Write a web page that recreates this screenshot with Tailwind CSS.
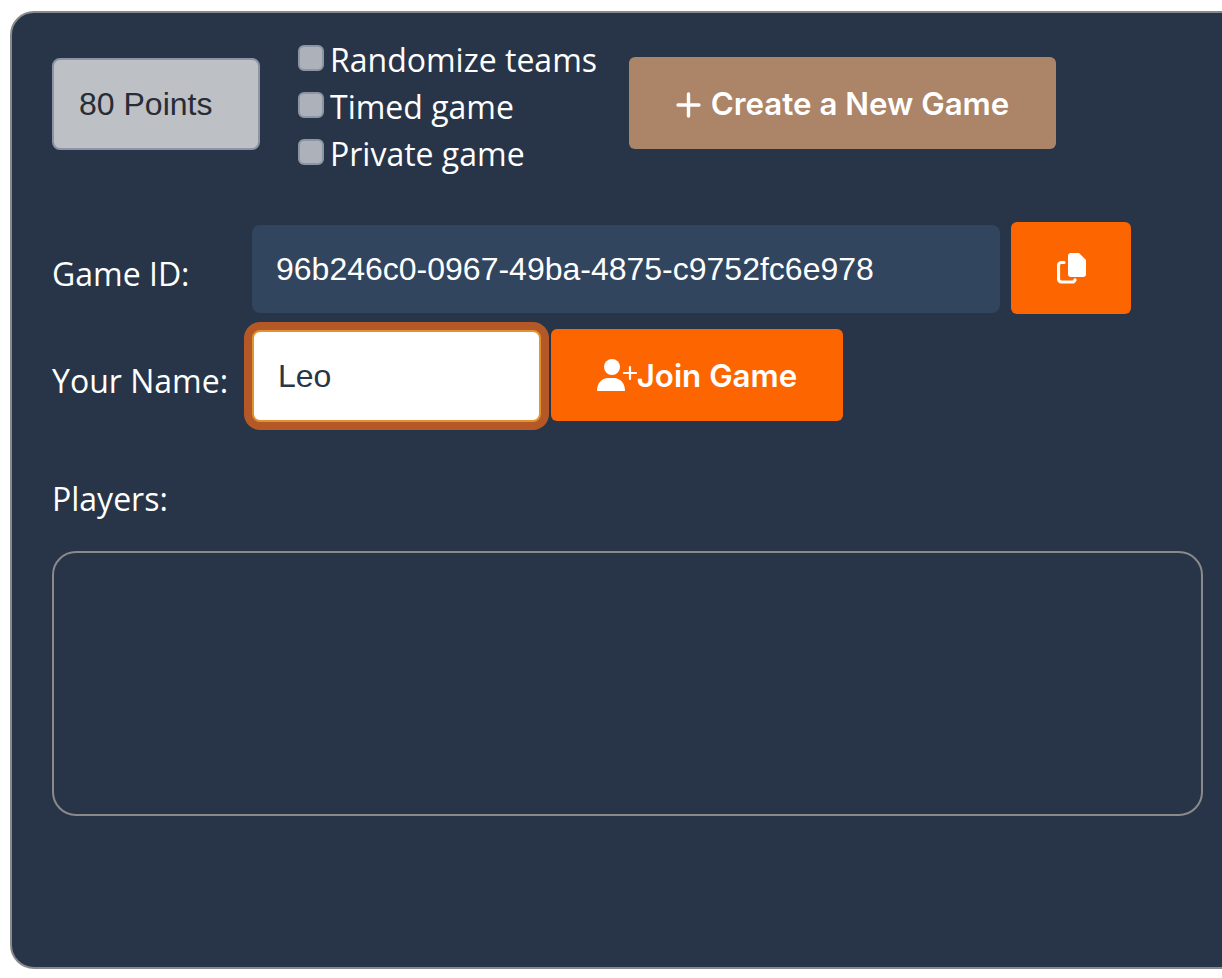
<!DOCTYPE html>
<html lang="en">
<head>
    <meta charset="UTF-8">
    <meta name="viewport" content="width=device-width, initial-scale=1.0">
    <title>Game Lobby</title>
    <script src="https://cdn.jsdelivr.net/npm/@tailwindcss/browser@4"></script>
</head>
<body class="bg-white h-[978px] overflow-hidden font-['Open_Sans',sans-serif]">
    <div class="ml-[10px] mt-[11px] w-[1240px] h-[958px] bg-[#283548] border-2 border-[#8a8a8a] rounded-[24px] pl-[40px] text-white">
        <!-- Options -->
        <div class="flex items-start pt-[23px] h-[209px]">
            <div class="mt-[22px] w-[208px] h-[92px] flex items-center pl-[25px] bg-[#bdc0c5] border-2 border-[#8b95a3] rounded-lg text-[#272c35] text-[32px] font-['Liberation_Sans',sans-serif]">80 Points</div>
            <div class="ml-[38px] w-[331px] flex flex-col">
                <label class="flex items-center h-[47px] text-[32px] leading-none"><input type="checkbox" class="appearance-none shrink-0 w-[26px] h-[26px] mr-[6px] -mt-[3px] bg-[#adb1ba] border-2 border-[#8b95a3] rounded-[6px]">Randomize teams</label>
                <label class="flex items-center h-[47px] text-[32px] leading-none"><input type="checkbox" class="appearance-none shrink-0 w-[26px] h-[26px] mr-[6px] -mt-[3px] bg-[#adb1ba] border-2 border-[#8b95a3] rounded-[6px]">Timed game</label>
                <label class="flex items-center h-[47px] text-[32px] leading-none"><input type="checkbox" class="appearance-none shrink-0 w-[26px] h-[26px] mr-[6px] -mt-[3px] bg-[#adb1ba] border-2 border-[#8b95a3] rounded-[6px]">Private game</label>
            </div>
            <button class="mt-[21px] w-[427px] h-[92px] pt-[3px] flex items-center justify-center gap-[10px] bg-[#ac8467] rounded-md text-[31.3px] font-semibold font-['Inter',sans-serif]">
                <svg class="w-[25px] h-[26px]" viewBox="0 0 25 26" fill="none" stroke="currentColor" stroke-width="3.4" stroke-linecap="round"><path d="M12.5 2v22M2 13h21"/></svg>
                Create a New Game
            </button>
        </div>

        <!-- Game ID -->
        <div class="flex items-center h-[92px]">
            <span class="w-[200px] text-[32px] mt-[11px]">Game ID:</span>
            <div class="w-[748px] h-[88px] mt-[2px] flex items-center pl-[24px] bg-[#32455e] rounded-lg text-[32px] font-['Liberation_Sans',sans-serif]">96b246c0-0967-49ba-4875-c9752fc6e978</div>
            <button class="ml-[11px] w-[120px] h-[92px] flex items-center justify-center bg-[#fd6500] rounded-md">
                <svg class="w-[29px] h-[31px]" viewBox="0 0 29 31" fill="none">
                    <path d="M14 0h8l7 7v14a3 3 0 0 1-3 3H14a3 3 0 0 1-3-3V3a3 3 0 0 1 3-3z" fill="#fff"/>
                    <path d="M7 9.5H4.5a3 3 0 0 0-3 3V26a3 3 0 0 0 3 3H15a3 3 0 0 0 3-2" stroke="#fff" stroke-width="3.2" stroke-linecap="round"/>
                </svg>
            </button>
        </div>

        <!-- Name -->
        <div class="flex items-center h-[92px] mt-[15px]">
            <span class="w-[200px] text-[32px] mt-[11px]">Your Name:</span>
            <input type="text" value="Leo" class="w-[289px] h-[92px] mt-[2px] pl-[24px] bg-white text-[#2a3547] text-[32px] border-2 border-[#e2922f] rounded-lg ring-[8px] ring-[#b35826] outline-none font-['Liberation_Sans',sans-serif]">
            <button class="ml-[10px] w-[292px] h-[92px] flex items-center justify-center bg-[#fd6500] rounded-md text-[31.3px] font-semibold font-['Inter',sans-serif]">
                <svg class="w-[40px] h-[32px]" viewBox="0 0 40 32" fill="#fff">
                    <circle cx="15" cy="8" r="8"/>
                    <path d="M0 32c0-8 5-13 11-13h6c6 0 11 5 11 13z"/>
                    <path d="M33 8v12M27 14h12" stroke="#fff" stroke-width="2.2" stroke-linecap="round"/>
                </svg>
                <span class="mt-[3px]">Join Game</span>
            </button>
        </div>

        <!-- Players -->
        <div class="mt-[56px] text-[32px] leading-[44px]">Players:</div>
        <div class="mt-[30px] w-[1151px] h-[265px] border-2 border-[#8a8a8a] rounded-[24px]"></div>
    </div>
</body>
</html>
